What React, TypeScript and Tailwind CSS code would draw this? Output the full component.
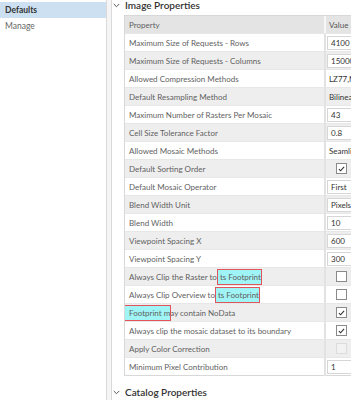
import React from 'react';

type Row = {
	label: React.ReactNode;
	kind: 'input' | 'text' | 'check' | 'empty' | 'disabled';
	value?: string;
};

const Mark = ({ children, className = '' }: { children: React.ReactNode; className?: string }) => (
	<span className={'bg-[#9ff5f5] outline outline-[1.5px] outline-[#e2545a] py-[2px] ' + className}>{children}</span>
);

const rows: Row[] = [
	{ label: 'Maximum Size of Requests - Rows', kind: 'input', value: '4100' },
	{ label: 'Maximum Size of Requests - Columns', kind: 'input', value: '15000' },
	{ label: 'Allowed Compression Methods', kind: 'text', value: 'LZ77,None,JPEG' },
	{ label: 'Default Resampling Method', kind: 'text', value: 'Bilinear' },
	{ label: 'Maximum Number of Rasters Per Mosaic', kind: 'input', value: '43' },
	{ label: 'Cell Size Tolerance Factor', kind: 'input', value: '0.8' },
	{ label: 'Allowed Mosaic Methods', kind: 'text', value: 'Seamline' },
	{ label: 'Default Sorting Order', kind: 'check' },
	{ label: 'Default Mosaic Operator', kind: 'input', value: 'First' },
	{ label: 'Blend Width Unit', kind: 'input', value: 'Pixels' },
	{ label: 'Blend Width', kind: 'input', value: '10' },
	{ label: 'Viewpoint Spacing X', kind: 'input', value: '600' },
	{ label: 'Viewpoint Spacing Y', kind: 'input', value: '300' },
	{
		label: (
			<>
				Always Clip the Raster to i<Mark className="-ml-[3px] pl-[2px]">ts Footprint</Mark>
			</>
		),
		kind: 'empty',
	},
	{
		label: (
			<>
				Always Clip Overview to i<Mark className="-ml-[3px] pl-[2px]">ts Footprint</Mark>
			</>
		),
		kind: 'empty',
	},
	{
		label: (
			<>
				<Mark className="-ml-[4px] pl-[4px]">Footprint m</Mark>
				ay contain NoData
			</>
		),
		kind: 'check',
	},
	{ label: 'Always clip the mosaic dataset to its boundary', kind: 'check' },
	{ label: 'Apply Color Correction', kind: 'disabled' },
	{ label: 'Minimum Pixel Contribution', kind: 'input', value: '1' },
];

const Chevron = () => (
	<svg width="7" height="5" viewBox="0 0 7 5" className="shrink-0">
		<path d="M0.8 1 L3.5 3.7 L6.2 1" fill="none" stroke="#555" strokeWidth="1" />
	</svg>
);

const Check = ({ on, disabled }: { on?: boolean; disabled?: boolean }) => (
	<div
		className={
			disabled
				? 'w-[11px] h-[11px] border border-[#dcdcdc] bg-[#f2f2f2]'
				: 'w-[11px] h-[11px] border border-[#8a8a8a] bg-white flex items-center justify-center'
		}
	>
		{on && (
			<svg width="7" height="6" viewBox="0 0 8 7">
				<path d="M1 3.6 L3 5.6 L7 1" fill="none" stroke="#333" strokeWidth="1.3" />
			</svg>
		)}
	</div>
);

const ValueCell = ({ row }: { row: Row }) => {
	if (row.kind === 'input') {
		return (
			<div className="h-full py-[2px] pl-[1px]">
				<div className="h-full bg-white border border-[#d6d6d6] border-r-0 pl-[3px] flex items-center text-[#333]">
					{row.value}
				</div>
			</div>
		);
	}
	if (row.kind === 'text') {
		return <div className="h-full pl-[3px] flex items-center text-[#333] whitespace-nowrap">{row.value}</div>;
	}
	return (
		<div className="h-full pl-[10px] flex items-center">
			<Check on={row.kind === 'check'} disabled={row.kind === 'disabled'} />
		</div>
	);
};

const App = () => {
	return (
		<div className="w-[351px] h-[400px] bg-white flex overflow-hidden font-['Lato',sans-serif]">
			<div className="w-[106px] shrink-0 pt-[2px] text-[8.5px]">
				<div className="h-[16px] bg-[#cce0f1] pl-[5px] flex items-center font-bold text-[#333]">Defaults</div>
				<div className="h-[16px] pl-[5px] flex items-center text-[#666]">Manage</div>
			</div>
			<div className="w-[6px] shrink-0 border-l border-r border-[#dadada] bg-[#f5f5f5]" />
			<div className="flex-1 min-w-0 flex flex-col">
				<div className="h-[11px] flex items-center gap-[5px] pl-[1px] text-[10px] font-semibold text-[#333]">
					<Chevron />
					Image Properties
				</div>
				<div className="ml-[12px] mt-[4px] border border-[#d8d8d8] border-r-0 text-[8px] text-[#5f5f5f] whitespace-nowrap">
					<div className="h-[17px] grid grid-cols-[201px_1fr] bg-[#e4e4e4]">
						<div className="pl-[4px] flex items-center border-r-2 border-[#f7f7f7]">Property</div>
						<div className="pl-[3px] flex items-center text-[#555]">Value</div>
					</div>
					{rows.map((row, i) => (
						<div
							key={i}
							className={
								'h-[18px] grid grid-cols-[201px_1fr] border-t border-[#e7e7e7] ' +
								(i % 2 === 0 ? 'bg-white' : 'bg-[#eeeeee]')
							}
						>
							<div className="pl-[4px] flex items-center border-r-2 border-[#e2e2e2] overflow-hidden">
								<span>{row.label}</span>
							</div>
							<ValueCell row={row} />
						</div>
					))}
				</div>
				<div className="h-[16px] mt-[8px] flex items-center gap-[5px] pl-[1px] text-[10px] font-semibold text-[#333]">
					<Chevron />
					Catalog Properties
				</div>
			</div>
		</div>
	);
};

export default App;
